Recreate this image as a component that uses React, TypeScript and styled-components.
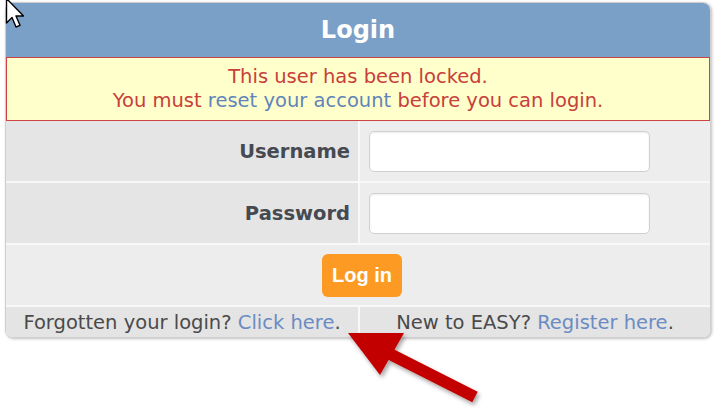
import React from "react";
import styled, { createGlobalStyle } from "styled-components";

const Global = createGlobalStyle`
  html, body { margin: 0; padding: 0; background: #fff; }
  body { font-family: "DejaVu Sans", Verdana, sans-serif; }
`;

const Page = styled.div`
  position: relative;
  width: 716px;
  height: 413px;
  overflow: hidden;
  background: #fff;
  padding: 2px 0 0 5px;
  box-sizing: border-box;
`;

const Panel = styled.div`
  width: 706px;
  box-sizing: border-box;
  border: 1px solid #cfcfcf;
  border-radius: 8px;
  overflow: hidden;
  box-shadow: 1px 1px 3px rgba(0, 0, 0, 0.25);
  background: #f8f8f8;
`;

const Header = styled.div`
  height: 54px;
  background: #7ba0c8;
  color: #fff;
  font-weight: bold;
  font-size: 24px;
  display: flex;
  align-items: center;
  justify-content: center;
`;

const Alert = styled.div`
  background: #ffffcc;
  border: 1px solid #d04343;
  color: #c8403a;
  font-size: 19.5px;
  line-height: 24px;
  padding: 7px 0 7px;
  text-align: center;
`;

const Link = styled.a`
  color: ${(p: { $tone?: string }) => p.$tone || "#5f85b8"};
  text-decoration: none;
`;

const Grid = styled.div`
  display: grid;
  grid-template-columns: 352px 350px;
  column-gap: 2px;
  row-gap: 2px;
  background: #f8f8f8;
`;

const LabelCell = styled.div`
  height: 60px;
  background: #e5e5e5;
  display: flex;
  align-items: center;
  justify-content: flex-end;
  padding-right: 8px;
  font-weight: bold;
  font-size: 19.5px;
  color: #454a52;
`;

const FieldCell = styled.div`
  height: 60px;
  background: #ededed;
  display: flex;
  align-items: center;
  padding-left: 9px;
`;

const Input = styled.input`
  width: 281px;
  height: 41px;
  box-sizing: border-box;
  border: 1px solid #d0d0d0;
  border-radius: 5px;
  background: #fff;
  box-shadow: inset 0 1px 2px rgba(0, 0, 0, 0.08);
  outline: none;
`;

const ButtonRow = styled.div`
  grid-column: 1 / -1;
  height: 60px;
  background: #ededed;
  display: flex;
  align-items: center;
  justify-content: center;
  padding-left: 8px;
`;

const Button = styled.button`
  width: 80px;
  height: 43px;
  border: none;
  border-radius: 6px;
  background: #fd9a23;
  color: #fff;
  font-family: "Liberation Sans", Arial, sans-serif;
  font-weight: bold;
  font-size: 20px;
  padding: 0;
`;

const FooterCell = styled.div`
  height: 30px;
  background: #e4e4e4;
  display: flex;
  align-items: center;
  justify-content: center;
  font-size: 19.5px;
  color: #4a4a4a;
`;

const Overlay = styled.svg`
  position: absolute;
  overflow: visible;
`;

export default function App() {
  return (
    <Page>
      <Global />
      <Panel>
        <Header>Login</Header>
        <Alert>
          This user has been locked.
          <br />
          You must <Link href="#">reset your account</Link> before you can login.
        </Alert>
        <Grid>
          <LabelCell>Username</LabelCell>
          <FieldCell>
            <Input type="text" />
          </FieldCell>
          <LabelCell>Password</LabelCell>
          <FieldCell>
            <Input type="password" />
          </FieldCell>
          <ButtonRow>
            <Button>Log in</Button>
          </ButtonRow>
          <FooterCell>
            Forgotten your login?&nbsp;<Link href="#" $tone="#6b8cc2">Click here</Link>.
          </FooterCell>
          <FooterCell>
            New to EASY?&nbsp;<Link href="#" $tone="#6b8cc2">Register here</Link>.
          </FooterCell>
        </Grid>
      </Panel>

      <Overlay
        style={{ left: 5, top: -3 }}
        width="24"
        height="36"
        viewBox="0 0 24 36"
      >
        <path
          d="M1.5 1.5 L1.5 26 L7 20.5 L11 30 L15 28.3 L11 19 L18.5 19 Z"
          fill="#fff"
          stroke="#000"
          strokeWidth="1.4"
          strokeLinejoin="round"
        />
      </Overlay>

      <Overlay
        style={{ left: 340, top: 320 }}
        width="150"
        height="90"
        viewBox="0 0 150 90"
      >
        <defs>
          <filter id="sh" x="-20%" y="-20%" width="140%" height="140%">
            <feDropShadow dx="2" dy="3" stdDeviation="2" floodColor="#000" floodOpacity="0.35" />
          </filter>
        </defs>
        <g filter="url(#sh)">
          <line x1="50" y1="34" x2="135" y2="77" stroke="#c30000" strokeWidth="12" />
          <polygon points="8,13 64,13 40,55" fill="#c30000" />
        </g>
      </Overlay>
    </Page>
  );
}
